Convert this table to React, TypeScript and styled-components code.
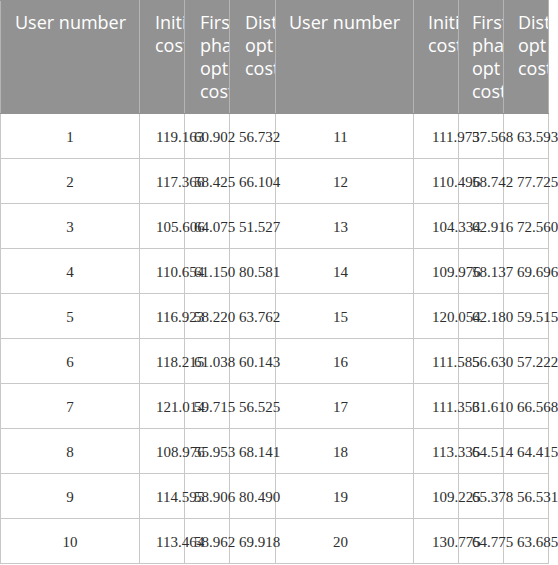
import React from "react";
import styled, { createGlobalStyle } from "styled-components";

const Global = createGlobalStyle`
  html, body { margin: 0; padding: 0; background: #ffffff; }
  body { overflow: hidden; }
`;

const Table = styled.table`
  border-collapse: collapse;
  table-layout: fixed;
  width: 548px;
`;

const HeadRow = styled.tr`
  height: 113px;
  background: #929292;
`;

const Th = styled.th<{ $pl: number }>`
  font-family: "Open Sans", "Noto Sans", sans-serif;
  font-weight: 400;
  font-size: 18px;
  line-height: 23px;
  color: #ffffff;
  text-align: left;
  vertical-align: top;
  padding: 10px 0 0 ${(p) => p.$pl}px;
  overflow: hidden;
  border-left: 1px solid #b4b4b4;
  border-right: 1px solid #b4b4b4;
  border-top: 1px solid #929292;
  border-bottom: 1px solid #929292;
`;

const Row = styled.tr`
  height: 45px;
`;

const Td = styled.td<{ $pl: number; $center?: boolean; $pr?: number }>`
  font-family: "Liberation Serif", "Times New Roman", serif;
  font-size: 15px;
  color: #2e2e2e;
  text-align: ${(p) => (p.$center ? "center" : "left")};
  vertical-align: middle;
  white-space: nowrap;
  padding: 2px ${(p) => p.$pr ?? 0}px 0 ${(p) => p.$pl}px;
  border: 1px solid #c8c8c8;
`;

const widths = [139, 45, 45, 46, 138, 45, 45, 45];

const headers = [
  "User number",
  "Initial cost",
  "First phase opt cost",
  "Dist opt cost",
];

const headPad = [14, 15, 15, 15, 13, 14, 13, 14];

const rows: [string, string, string, string, string, string, string, string][] = [
  ["1", "119.163", "60.902", "56.732", "11", "111.973", "57.568", "63.593"],
  ["2", "117.366", "58.425", "66.104", "12", "110.496", "58.742", "77.725"],
  ["3", "105.606", "64.075", "51.527", "13", "104.334", "62.916", "72.560"],
  ["4", "110.654", "61.150", "80.581", "14", "109.976", "58.137", "69.696"],
  ["5", "116.923", "58.220", "63.762", "15", "120.054", "62.180", "59.515"],
  ["6", "118.215", "61.038", "60.143", "16", "111.585", "56.630", "57.222"],
  ["7", "121.014", "59.715", "56.525", "17", "111.353", "61.610", "66.568"],
  ["8", "108.976", "55.953", "68.141", "18", "113.335", "64.514", "64.415"],
  ["9", "114.595", "58.906", "80.490", "19", "109.225", "65.378", "56.531"],
  ["10", "113.464", "58.962", "69.918", "20", "130.775", "64.775", "63.685"],
];

const bodyPad = [0, 16, 9, 9, 0, 18, 13, 13];

export default function App() {
  return (
    <>
      <Global />
      <Table>
        <colgroup>
          {widths.map((w, i) => (
            <col key={i} style={{ width: w }} />
          ))}
        </colgroup>
        <thead>
          <HeadRow>
            {[...headers, ...headers].map((h, i) => (
              <Th key={i} $pl={headPad[i]}>
                {h}
              </Th>
            ))}
          </HeadRow>
        </thead>
        <tbody>
          {rows.map((r, ri) => (
            <Row key={ri}>
              {r.map((c, ci) =>
                ci === 0 || ci === 4 ? (
                  <Td key={ci} $pl={0} $pr={ci === 4 ? 8 : 0} $center>
                    {c}
                  </Td>
                ) : (
                  <Td key={ci} $pl={bodyPad[ci]}>
                    {c}
                  </Td>
                )
              )}
            </Row>
          ))}
        </tbody>
      </Table>
    </>
  );
}
